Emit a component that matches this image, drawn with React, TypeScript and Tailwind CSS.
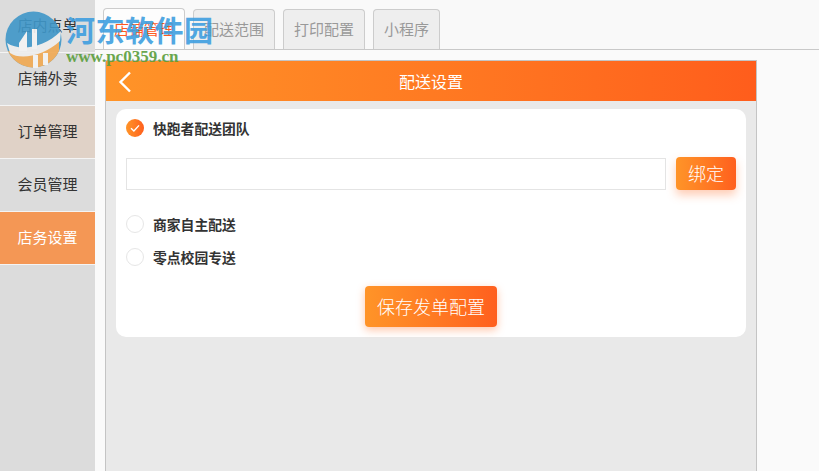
const F = "font-['Noto_Sans_CJK_SC','Noto_Sans',sans-serif]";

const sideItems = [
  { label: "店内点单", cls: "bg-[#dcdcdc] text-[#333]" },
  { label: "店铺外卖", cls: "bg-[#dcdcdc] text-[#333]" },
  { label: "订单管理", cls: "bg-[#e0d2c7] text-[#333]" },
  { label: "会员管理", cls: "bg-[#dcdcdc] text-[#333]" },
  { label: "店务设置", cls: "bg-[#f49755] text-white" },
];

const tabs = [
  { label: "店铺管理", cls: "w-[82px] bg-[#fdfdfd] text-[#ff5a1f] h-[41px]" },
  { label: "配送范围", cls: "w-[82px] bg-[#eeeeee] text-[#999]" },
  { label: "打印配置", cls: "w-[82px] bg-[#eeeeee] text-[#999]" },
  { label: "小程序", cls: "w-[67px] bg-[#eeeeee] text-[#999]" },
];

function Radio({ on, label }: { on?: boolean; label: string }) {
  return (
    <div className="flex items-center h-[18px]">
      {on ? (
        <span className="flex items-center justify-center w-[18px] h-[18px] rounded-full bg-gradient-to-r from-[#ff9428] to-[#ff5f1e]">
          <svg width="12" height="12" viewBox="0 0 12 12" fill="none">
            <path d="M2 6.3 L4.9 9 L10 3.4" stroke="#fff" strokeWidth="1.4" />
          </svg>
        </span>
      ) : (
        <span className="w-[18px] h-[18px] rounded-full border border-[#e6e6e6] bg-white" />
      )}
      <span className="ml-[9px] text-[13.8px] font-bold text-[#333] leading-[18px]">{label}</span>
    </div>
  );
}

export default function App() {
  return (
    <div className={`${F} relative flex w-[819px] h-[471px] overflow-hidden bg-[#fafafa]`}>
      <aside className="w-[95px] shrink-0 bg-[#dcdcdc] flex flex-col">
        {sideItems.map((s) => (
          <div
            key={s.label}
            className={`h-[53px] pb-[1px] flex items-center justify-center text-[15px] border-b border-[#f4f4f4] ${s.cls}`}
          >
            {s.label}
          </div>
        ))}
      </aside>

      <main className="flex-1 flex flex-col min-w-0">
        <div className="h-[50px] shrink-0 border-b border-[#c9c9c9] flex items-end pl-[8px] gap-[8px] bg-[#f9f9f9]">
          {tabs.map((t) => (
            <div
              key={t.label}
              className={`h-[40px] flex items-center justify-center text-[15px] border border-b-0 border-[#cccccc] rounded-t-[4px] relative top-[0px] ${t.cls}`}
            >
              {t.label}
            </div>
          ))}
        </div>

        <section className="mt-[10px] ml-[10px] w-[652px] flex-1 bg-[#e9e9e9] border-x border-t border-[#c4c4c4] flex flex-col">
          <header className="h-[40px] shrink-0 relative flex items-center justify-center bg-gradient-to-r from-[#ff9428] to-[#ff5d1c] text-white text-[16px]">
            <svg className="absolute left-[12px] top-[10px]" width="14" height="22" viewBox="0 0 14 22" fill="none">
              <path d="M12 1.5 L2.5 11 L12 20.5" stroke="#fff" strokeWidth="2.4" />
            </svg>
            配送设置
          </header>

          <div className="mt-[8px] mx-[10px] h-[228px] bg-white rounded-[10px] px-[10px] pt-[10px] flex flex-col">
            <Radio on label="快跑者配送团队" />
            <div className="mt-[20px] flex items-start">
              <div className="w-[540px] h-[32px] mt-[1px] border border-[#e4e4e4] bg-white" />
              <button className="ml-[10px] w-[60px] h-[33px] rounded-[4px] bg-gradient-to-r from-[#ff9428] to-[#ff5f1e] text-white text-[18px] font-light shadow-[0_5px_10px_rgba(255,110,40,0.35)]">
                绑定
              </button>
            </div>
            <div className="mt-[25px]">
              <Radio label="商家自主配送" />
            </div>
            <div className="mt-[15px]">
              <Radio label="零点校园专送" />
            </div>
            <div className="mt-[20px] flex justify-center">
              <button className="w-[132px] h-[41px] rounded-[4px] bg-gradient-to-r from-[#ff9428] to-[#ff5f1e] text-white text-[18px] font-light shadow-[0_3px_8px_rgba(255,110,40,0.4)]">
                保存发单配置
              </button>
            </div>
          </div>
        </section>
      </main>

      {/* watermark overlay */}
      <div className="absolute left-[5px] top-[11px] w-[57px] h-[57px] opacity-90">
        <svg width="57" height="57" viewBox="0 0 57 57">
          <circle cx="28.5" cy="28.5" r="28" fill="#3f97c9" />
          <path d="M3 40 A28 28 0 0 0 54 40 L54 26 C40 36 20 42 3 40Z" fill="#f0a851" />
          <path d="M2 32 C14 40 38 38 56 20 L55 30 C40 44 16 50 5 42Z" fill="#eeeeee" />
          <path d="M14 32 L22 20 L22 40 L14 40Z M27 18 h5 v20 h-5z" fill="#f4f4f4" />
          <path d="M28 44 h5 v13 h-5z M38 42 h5 v12 h-5z" fill="#f4f4f4" />
        </svg>
      </div>
      <div className="absolute left-[66px] top-[10px] text-[29px] leading-[38px] font-bold tracking-[0.5px] text-[#3f9fe0] opacity-90 whitespace-nowrap">
        河东软件园
      </div>
      <div className="absolute left-[66px] top-[47px] font-['Liberation_Serif',serif] text-[17px] leading-[20px] font-bold text-[#5a9e3c] opacity-90 whitespace-nowrap">
        www.pc0359.cn
      </div>
    </div>
  );
}
